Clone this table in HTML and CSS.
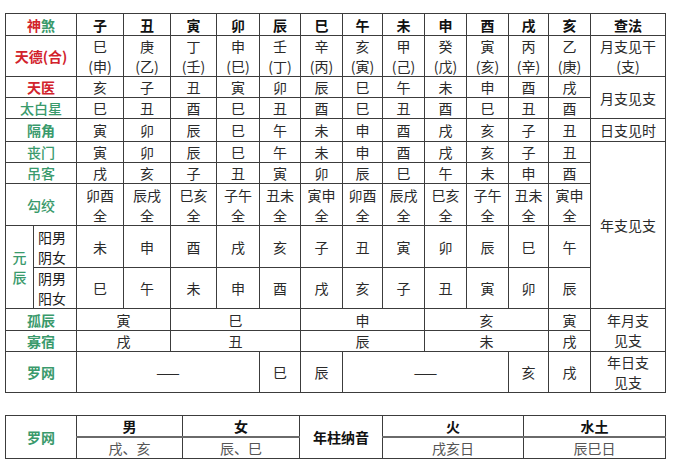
FILE: index.html
```html
<!DOCTYPE html>
<html lang="zh-CN">
<head>
<meta charset="utf-8">
<title>神煞查法</title>
<link rel="stylesheet" href="styles.css">
</head>
<body>
<div class="page">
<table class="grid main">
  <colgroup>
    <col class="c-a"><col class="c-b">
    <col class="c47"><col class="c47"><col class="c46"><col class="c43"><col class="c41"><col class="c42">
    <col class="c40"><col class="c42"><col class="c42"><col class="c42"><col class="c40"><col class="c42">
    <col class="c-law">
  </colgroup>
  <tr class="r22 head">
    <td colspan="2" class="label"><span class="red">神</span><span class="green">煞</span></td>
    <td>子</td><td>丑</td><td>寅</td><td>卯</td><td>辰</td><td>巳</td><td>午</td><td>未</td><td>申</td><td>酉</td><td>戌</td><td>亥</td>
    <td>查法</td>
  </tr>
  <tr class="r41 two">
    <td colspan="2" class="label red">天德(合)</td>
    <td>巳<br>(申)</td><td>庚<br>(乙)</td><td>丁<br>(壬)</td><td>申<br>(巳)</td><td>壬<br>(丁)</td><td>辛<br>(丙)</td>
    <td>亥<br>(寅)</td><td>甲<br>(己)</td><td>癸<br>(戊)</td><td>寅<br>(亥)</td><td>丙<br>(辛)</td><td>乙<br>(庚)</td>
    <td>月支见干<br>(支)</td>
  </tr>
  <tr class="r21">
    <td colspan="2" class="label red">天医</td>
    <td>亥</td><td>子</td><td>丑</td><td>寅</td><td>卯</td><td>辰</td><td>巳</td><td>午</td><td>未</td><td>申</td><td>酉</td><td>戌</td>
    <td rowspan="2">月支见支</td>
  </tr>
  <tr class="r20">
    <td colspan="2" class="label green thin">太白星</td>
    <td>巳</td><td>丑</td><td>酉</td><td>巳</td><td>丑</td><td>酉</td><td>巳</td><td>丑</td><td>酉</td><td>巳</td><td>丑</td><td>酉</td>
  </tr>
  <tr class="r23">
    <td colspan="2" class="label green">隔角</td>
    <td>寅</td><td>卯</td><td>辰</td><td>巳</td><td>午</td><td>未</td><td>申</td><td>酉</td><td>戌</td><td>亥</td><td>子</td><td>丑</td>
    <td>日支见时</td>
  </tr>
  <tr class="r21">
    <td colspan="2" class="label green thin">丧门</td>
    <td>寅</td><td>卯</td><td>辰</td><td>巳</td><td>午</td><td>未</td><td>申</td><td>酉</td><td>戌</td><td>亥</td><td>子</td><td>丑</td>
    <td rowspan="5">年支见支</td>
  </tr>
  <tr class="r20">
    <td colspan="2" class="label green thin">吊客</td>
    <td>戌</td><td>亥</td><td>子</td><td>丑</td><td>寅</td><td>卯</td><td>辰</td><td>巳</td><td>午</td><td>未</td><td>申</td><td>酉</td>
  </tr>
  <tr class="r42 two">
    <td colspan="2" class="label green thin">勾绞</td>
    <td>卯酉<br>全</td><td>辰戌<br>全</td><td>巳亥<br>全</td><td>子午<br>全</td><td>丑未<br>全</td><td>寅申<br>全</td>
    <td>卯酉<br>全</td><td>辰戌<br>全</td><td>巳亥<br>全</td><td>子午<br>全</td><td>丑未<br>全</td><td>寅申<br>全</td>
  </tr>
  <tr class="r42 two">
    <td rowspan="2" class="label green thin">元<br>辰</td>
    <td class="sub">阳男<br>阴女</td>
    <td>未</td><td>申</td><td>酉</td><td>戌</td><td>亥</td><td>子</td><td>丑</td><td>寅</td><td>卯</td><td>辰</td><td>巳</td><td>午</td>
  </tr>
  <tr class="r40 two">
    <td class="sub">阴男<br>阳女</td>
    <td>巳</td><td>午</td><td>未</td><td>申</td><td>酉</td><td>戌</td><td>亥</td><td>子</td><td>丑</td><td>寅</td><td>卯</td><td>辰</td>
  </tr>
  <tr class="r22">
    <td colspan="2" class="label green">孤辰</td>
    <td colspan="2">寅</td><td colspan="3">巳</td><td colspan="3">申</td><td colspan="3">亥</td><td>寅</td>
    <td rowspan="2" class="two">年月支<br>见支</td>
  </tr>
  <tr class="r20">
    <td colspan="2" class="label green">寡宿</td>
    <td colspan="2">戌</td><td colspan="3">丑</td><td colspan="3">辰</td><td colspan="3">未</td><td>戌</td>
  </tr>
  <tr class="r41">
    <td colspan="2" class="label green">罗网</td>
    <td colspan="4">——</td><td>巳</td><td>辰</td><td colspan="4">——</td><td>亥</td><td>戌</td>
    <td class="two">年日支<br>见支</td>
  </tr>
</table>

<table class="grid foot">
  <colgroup>
    <col class="f71"><col class="f106"><col class="f117"><col class="f83"><col class="f141"><col class="f142">
  </colgroup>
  <tr class="r21">
    <td rowspan="2" class="label green">罗网</td>
    <td class="bold">男</td><td class="bold">女</td>
    <td rowspan="2" class="bold">年柱纳音</td>
    <td class="bold">火</td><td class="bold">水土</td>
  </tr>
  <tr class="r21 low">
    <td>戌、亥</td><td>辰、巳</td><td>戌亥日</td><td>辰巳日</td>
  </tr>
</table>
</div>
</body>
</html>
```

FILE: styles.css
```css
html, body {
  margin: 0;
  padding: 0;
  background: #ffffff;
}

.page {
  padding: 13px 0 0 5px;
  font-family: "Noto Sans CJK SC", "Liberation Sans", sans-serif;
  color: #2a2a2a;
}

.grid {
  border-collapse: collapse;
  table-layout: fixed;
  width: 660px;
  font-size: 14px;
}

.grid td {
  border: 1px solid #3c3c3c;
  padding: 0;
  text-align: center;
  vertical-align: middle;
  line-height: 20px;
  white-space: nowrap;
  overflow: hidden;
}

.c-a { width: 28px; }
.c-b { width: 43px; }
.c47 { width: 47px; }
.c46 { width: 46px; }
.c43 { width: 43px; }
.c42 { width: 42px; }
.c41 { width: 41px; }
.c40 { width: 40px; }
.c-law { width: 75px; }

.r20 { height: 20px; }
.r21 { height: 21px; }
.r22 { height: 22px; }
.r23 { height: 23px; }
.r40 { height: 40px; }
.r41 { height: 41px; }
.r42 { height: 42px; }

.two td, td.two {
  line-height: 20px;
}

.head td {
  font-weight: 700;
  color: #111;
}

.label {
  font-weight: 700;
  font-size: 14px;
}

.label.thin {
  font-weight: 500;
}

.red { color: #d2232c; }
.green { color: #3a9a6c; }

.sub {
  color: #1a1a1a;
  text-align: left;
  padding-left: 4px !important;
}

.main td.sub {
  text-align: left;
}

.foot {
  margin-top: 22px;
}

.f71 { width: 71px; }
.f106 { width: 106px; }
.f117 { width: 117px; }
.f83 { width: 83px; }
.f141 { width: 141px; }
.f142 { width: 142px; }

.bold {
  font-weight: 700;
  color: #111;
}

.low td {
  color: #555;
  border-top: 2px solid #6a6a6a;
}
```
